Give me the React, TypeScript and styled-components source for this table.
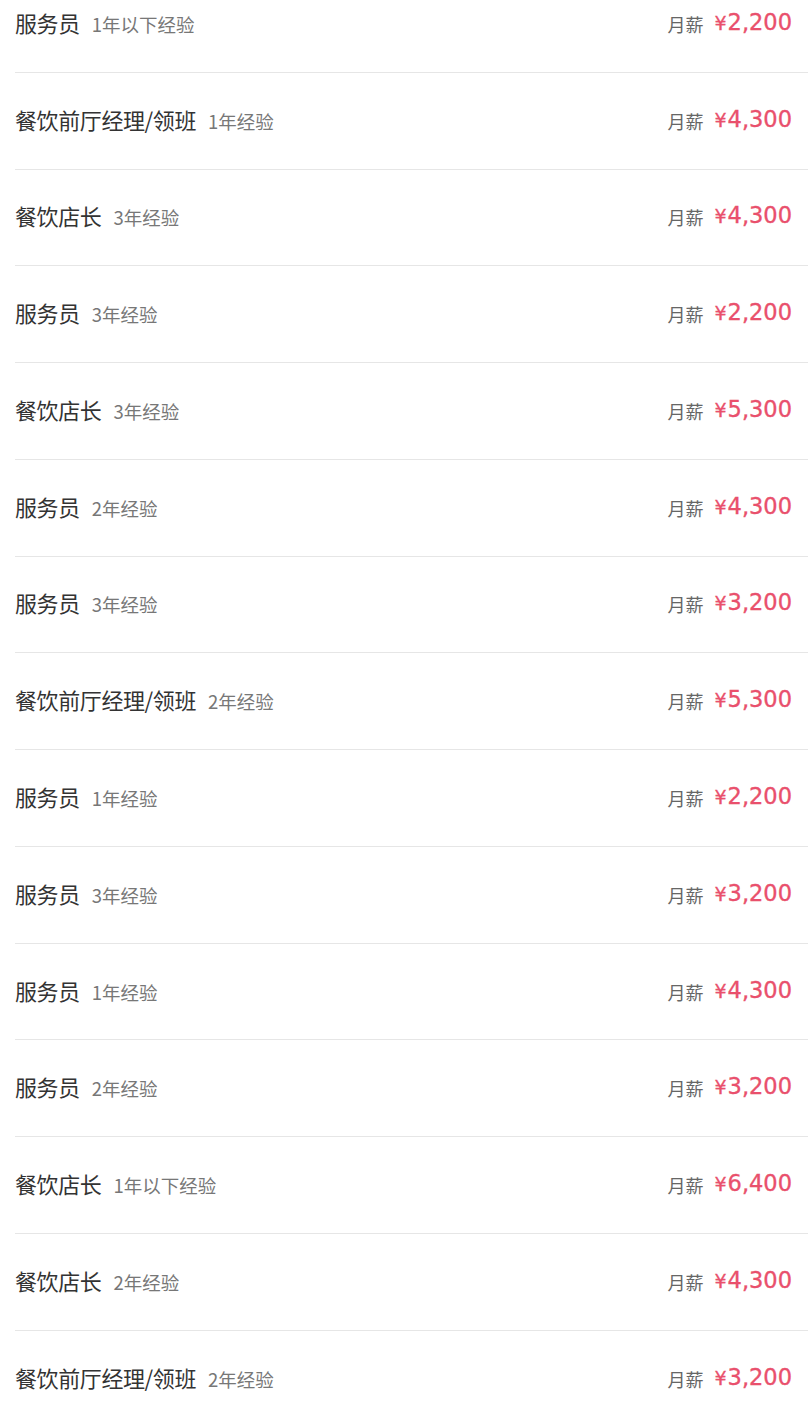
import React from "react";
import styled, { createGlobalStyle } from "styled-components";

const Global = createGlobalStyle`
  html, body { margin: 0; padding: 0; background: #fff; }
  body { font-family: "Noto Sans CJK SC", "Noto Sans", sans-serif; overflow: hidden; }
`;

const List = styled.ul`
  list-style: none;
  margin: -24px 0 0 0;
  padding: 0;
`;

const Row = styled.li`
  height: 96.77px;
  box-sizing: border-box;
  margin-left: 15px;
  padding: 0 16px 4px 0;
  border-bottom: 1px solid #e6e6e6;
  display: flex;
  align-items: center;
  justify-content: space-between;
`;

const Left = styled.div`
  display: flex;
  align-items: baseline;
  gap: 12px;
`;

const Title = styled.span`
  font-size: 22px;
  color: #333;
  letter-spacing: -0.4px;
`;

const Exp = styled.span`
  font-size: 18.5px;
  color: #777;
`;

const Right = styled.div`
  display: flex;
  align-items: baseline;
  gap: 11px;
`;

const Label = styled.span`
  font-size: 18px;
  color: #666;
  position: relative;
  top: 2px;
`;

const Price = styled.span`
  font-family: "DejaVu Sans", sans-serif;
  color: #e9506c;
  font-size: 22.5px;
  -webkit-text-stroke: 0.35px #e9506c;
  display: inline-flex;
  align-items: baseline;
  gap: 1px;
`;

const Yen = styled.span`
  font-size: 19px;
`;

const jobs: [string, string, string][] = [
  ["服务员", "1年以下经验", "2,200"],
  ["餐饮前厅经理/领班", "1年经验", "4,300"],
  ["餐饮店长", "3年经验", "4,300"],
  ["服务员", "3年经验", "2,200"],
  ["餐饮店长", "3年经验", "5,300"],
  ["服务员", "2年经验", "4,300"],
  ["服务员", "3年经验", "3,200"],
  ["餐饮前厅经理/领班", "2年经验", "5,300"],
  ["服务员", "1年经验", "2,200"],
  ["服务员", "3年经验", "3,200"],
  ["服务员", "1年经验", "4,300"],
  ["服务员", "2年经验", "3,200"],
  ["餐饮店长", "1年以下经验", "6,400"],
  ["餐饮店长", "2年经验", "4,300"],
  ["餐饮前厅经理/领班", "2年经验", "3,200"],
];

export default function App() {
  return (
    <>
      <Global />
      <List>
        {jobs.map(([t, e, p], i) => (
          <Row key={i}>
            <Left>
              <Title>{t}</Title>
              <Exp>{e}</Exp>
            </Left>
            <Right>
              <Label>月薪</Label>
              <Price>
                <Yen>¥</Yen>
                {p}
              </Price>
            </Right>
          </Row>
        ))}
      </List>
    </>
  );
}
